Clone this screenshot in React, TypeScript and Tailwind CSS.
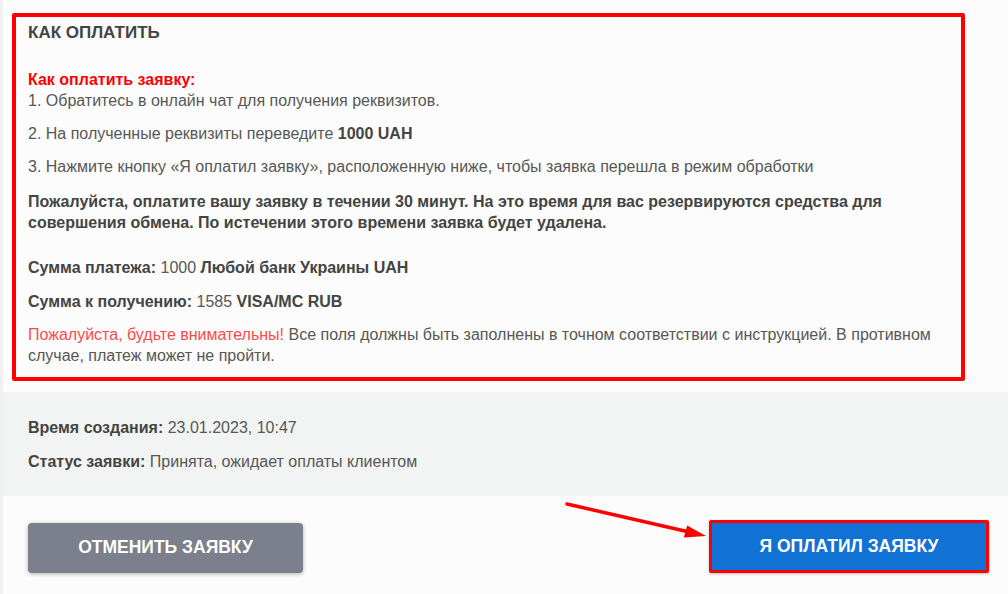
import React from "react";

const PaymentInfo = () => {
  return (
    <div className="rounded-[2px] border-4 border-[#ff0000] pt-1 pb-[11px] pl-3 pr-3 text-[16px] leading-[21px] text-[#575757]">
      <h2 className="text-[17px] font-bold leading-6 text-[#444]">КАК ОПЛАТИТЬ</h2>

      <div className="mt-6">
        <p className="font-bold text-[#ff0000]">Как оплатить заявку:</p>
        <p>1. Обратитесь в онлайн чат для получения реквизитов.</p>
      </div>
      <p className="mt-3">
        2. На полученные реквизиты переведите <b className="text-[#444]">1000 UAH</b>
      </p>
      <p className="mt-3">
        3. Нажмите кнопку «Я оплатил заявку», расположенную ниже, чтобы заявка перешла в режим обработки
      </p>
      <p className="mt-[14px] font-bold text-[#444]">
        Пожалуйста, оплатите вашу заявку в течении 30 минут. На это время для вас резервируются средства для
        совершения обмена. По истечении этого времени заявка будет удалена.
      </p>

      <p className="mt-6">
        <b className="text-[#444]">Сумма платежа:</b> 1000 <b className="text-[#444]">Любой банк Украины UAH</b>
      </p>
      <p className="mt-[13px]">
        <b className="text-[#444]">Сумма к получению:</b> 1585 <b className="text-[#444]">VISA/MC RUB</b>
      </p>
      <p className="mt-3">
        <span className="text-[#ff4a4a]">Пожалуйста, будьте внимательны!</span> Все поля должны быть заполнены в
        точном соответствии с инструкцией. В противном случае, платеж может не пройти.
      </p>
    </div>
  );
};

const Arrow = () => (
  <svg
    className="absolute left-[560px] top-[498px] h-[46px] w-[150px]"
    viewBox="0 0 150 46"
    fill="none"
  >
    <line x1="4" y1="6" x2="124" y2="33.5" stroke="#ff0000" strokeWidth="3.5" strokeLinecap="round" />
    <polygon points="143,38 124.2,27.4 120.8,39.6" fill="#ff0000" />
  </svg>
);

export default function App() {
  return (
    <div className="relative min-h-screen border-l-[3px] border-[#f1f1f1] bg-[#fcfcfc] font-['Liberation_Sans',Arial,sans-serif]">
      <div className="pt-[13px] pl-[9px] pr-[43px]">
        <PaymentInfo />
      </div>

      <div className="mt-[11px] bg-[#f1f4f3] pt-[25px] pb-[24px] pl-[25px] text-[16px] leading-[21px] text-[#575757]">
        <p>
          <b className="text-[#444]">Время создания:</b> 23.01.2023, 10:47
        </p>
        <p className="mt-[13px]">
          <b className="text-[#444]">Статус заявки:</b> Принята, ожидает оплаты клиентом
        </p>
      </div>

      <div className="flex items-center justify-between pt-6 pl-[25px] pr-[19px]">
        <button className="mt-[2px] h-[50px] w-[275px] rounded-[4px] bg-[#7b808c] text-[17.5px] font-bold uppercase text-white shadow-[0_1px_4px_rgba(0,0,0,0.3)]">
          Отменить заявку
        </button>
        <button className="h-[53px] w-[280px] rounded-[2px] border-[3px] border-[#ff0000] bg-[#1172d6] text-[17.5px] font-bold uppercase text-white shadow-[0_1px_3px_rgba(0,0,0,0.25)]">
          Я оплатил заявку
        </button>
      </div>

      <Arrow />
    </div>
  );
}
